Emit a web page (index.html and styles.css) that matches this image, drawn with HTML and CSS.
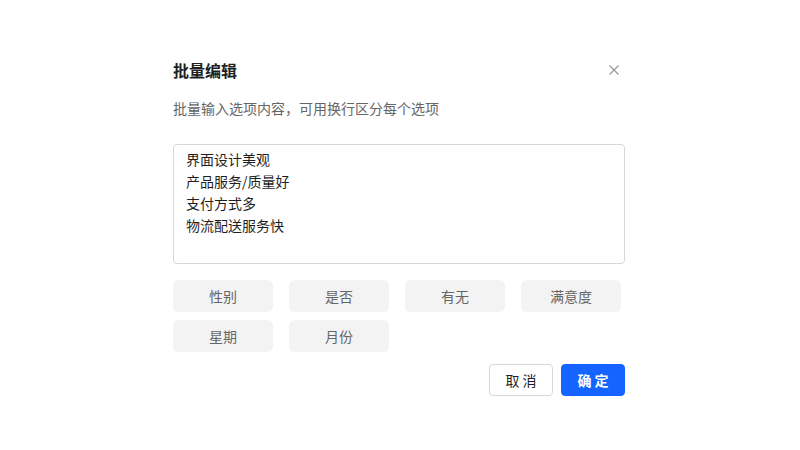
FILE: index.html
```html
<!DOCTYPE html>
<html lang="zh-CN">
<head>
  <meta charset="UTF-8" />
  <meta name="viewport" content="width=device-width, initial-scale=1.0"/>
  <title>批量编辑</title>
  <link rel="stylesheet" href="styles.css">
</head>
<body>
  <div class="dialog">
    <div class="dialog-head">
      <h1>批量编辑</h1>
      <button class="close" aria-label="关闭">
        <svg width="10" height="10" viewBox="0 0 10 10">
          <path d="M0.5 0.5L9.5 9.5M9.5 0.5L0.5 9.5" stroke="#999" stroke-width="1.2" fill="none"/>
        </svg>
      </button>
    </div>

    <p class="hint">批量输入选项内容，可用换行区分每个选项</p>

    <textarea class="options" rows="5">界面设计美观
产品服务/质量好
支付方式多
物流配送服务快</textarea>

    <div class="presets">
      <button class="chip">性别</button>
      <button class="chip">是否</button>
      <button class="chip">有无</button>
      <button class="chip">满意度</button>
      <button class="chip">星期</button>
      <button class="chip">月份</button>
    </div>

    <div class="footer">
      <button class="btn">取 消</button>
      <button class="btn primary">确 定</button>
    </div>
  </div>
</body>
</html>
```

FILE: styles.css
```css
body {
  margin: 0;
  background: #fff;
  font-family: "Noto Sans CJK SC", "Noto Sans", sans-serif;
  color: #1f1f1f;
}
.dialog {
  width: 452px;
  margin: 58px 0 0 173px;
}
.dialog-head {
  display: flex;
  align-items: center;
  justify-content: space-between;
  height: 24px;
}
.dialog-head h1 {
  margin: 0;
  font-size: 16px;
  font-weight: 700;
  line-height: 24px;
  color: #1f1f1f;
}
.close {
  width: 20px;
  height: 20px;
  margin-right: 1px;
  padding: 0;
  border: none;
  background: none;
  display: flex;
  align-items: center;
  justify-content: center;
}
.hint {
  margin: 15px 0 0;
  font-size: 14px;
  line-height: 22px;
  color: #666;
}
.options {
  display: block;
  box-sizing: border-box;
  width: 452px;
  height: 120px;
  margin-top: 25px;
  padding: 3px 12px 4px;
  border: 1px solid #d9d9d9;
  border-radius: 4px;
  font-family: inherit;
  font-size: 14px;
  line-height: 22px;
  color: #1f1f1f;
  resize: none;
  outline: none;
}
.presets {
  display: grid;
  grid-template-columns: repeat(4, 100px);
  column-gap: 16px;
  row-gap: 8px;
  margin-top: 16px;
}
.chip {
  height: 32px;
  border: none;
  border-radius: 6px;
  background: #f3f3f3;
  font-family: inherit;
  font-size: 14px;
  color: #666;
}
.footer {
  display: flex;
  justify-content: flex-end;
  gap: 8px;
  margin-top: 12px;
}
.btn {
  width: 64px;
  height: 32px;
  border: 1px solid #d9d9d9;
  border-radius: 4px;
  background: #fff;
  font-family: inherit;
  font-size: 14px;
  color: #1f1f1f;
}
.btn.primary {
  border-color: #1664ff;
  background: #1664ff;
  color: #fff;
  font-weight: 700;
}
```
